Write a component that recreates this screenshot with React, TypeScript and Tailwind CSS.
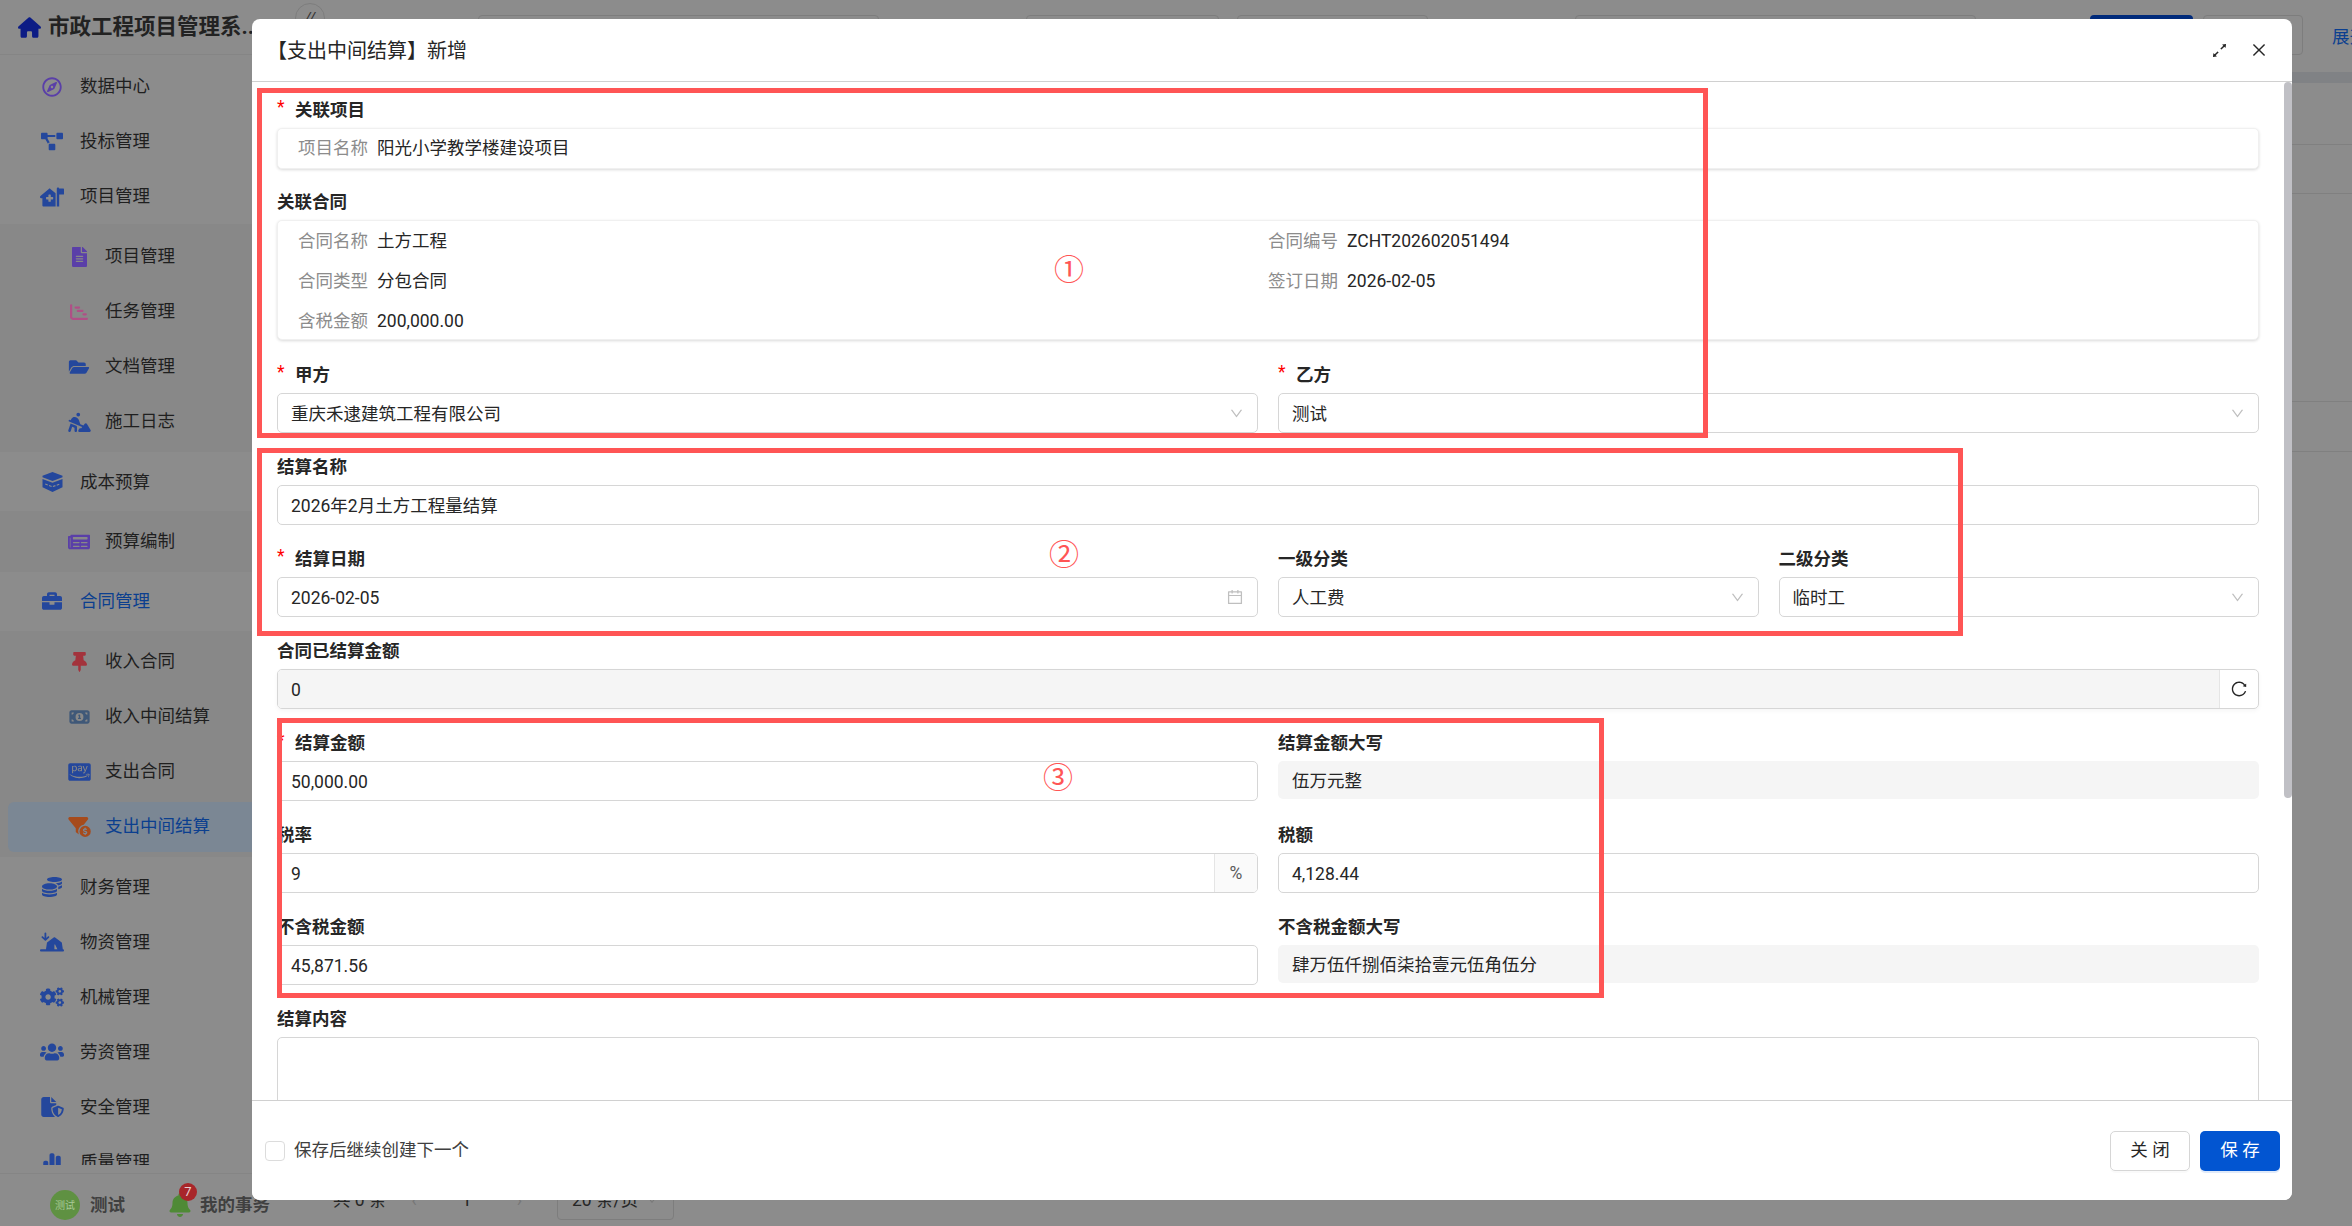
import React from 'react';
import { AiOutlineArrowsAlt, AiOutlineCalendar, AiOutlineClose, AiOutlineDown, AiOutlineReload } from 'react-icons/ai';
import {
  FaBell, FaBriefcase, FaCcAmazonPay, FaCoins, FaFileAlt, FaFolderOpen, FaNewspaper, FaProjectDiagram,
  FaRegCompass, FaThumbtack, FaUsers, FaCogs,
} from 'react-icons/fa';
import {
  FaChartGantt, FaChartSimple, FaFileShield, FaFilterCircleDollar, FaHouse, FaHouseMedicalFlag, FaMoneyBill1,
  FaPersonDigging, FaTentArrowDownToLine,
} from 'react-icons/fa6';

const font = 'font-["Roboto","Noto_Sans_CJK_SC",sans-serif]';

// ─── Sidebar ─────────────────────────────────────────────────────────────────
function BudgetIcon({ className }: { className?: string }) {
  return (
    <svg viewBox="0 0 24 22" className={className} fill="currentColor">
      <path d="M12 0 23 4.2v1.6L12 10 1 5.8V4.2z" />
      <path d="M1 7.6l11 4.2 11-4.2v9.2L12 22 1 16.800z" />
      <path d="M4 13.200l8 3 8-3" fill="none" stroke="#8c8c8c" strokeWidth="1.2" strokeDasharray="3 1.500" />
    </svg>
  );
}

type IconType = React.ComponentType<{ className?: string }>;

function TopItem({ icon: Icon, label, iconClass, active }: { icon: IconType; label: string; iconClass: string; active?: boolean }) {
  return (
    <div className="h-[55px] flex items-center pl-10">
      <div className="w-6 flex justify-center shrink-0">
        <Icon className={iconClass} />
      </div>
      <span className={`ml-4 text-[17.500px] ${active ? 'text-[#0b3f8f]' : 'text-[#1f1f1f]'}`}>{label}</span>
    </div>
  );
}

function SubItem({ icon: Icon, label, iconClass, active }: { icon: IconType; label: string; iconClass: string; active?: boolean }) {
  return (
    <div className="h-[55px] flex items-center pl-2">
      <div className={`flex-1 h-[50px] flex items-center pl-[59px] rounded-l-md ${active ? 'bg-[#7b8794]' : ''}`}>
        <div className="w-6 flex justify-center shrink-0">
          <Icon className={iconClass} />
        </div>
        <span className={`ml-[14px] text-[17.500px] ${active ? 'text-[#0b3f8f]' : 'text-[#1f1f1f]'}`}>{label}</span>
      </div>
    </div>
  );
}

function SubGroup({ children, className }: { children: React.ReactNode; className: string }) {
  return <div className={`py-[3px] bg-[#888888] ${className}`}>{children}</div>;
}

function Sidebar() {
  return (
    <aside className="w-[310px] h-full shrink-0 flex flex-col">
      <div className="h-[55px] shrink-0 flex items-center pl-[18px] border-b border-[#858585]">
        <FaHouse className="w-[23px] h-[21px] text-[#0c1c85]" />
        <span className="ml-[7px] text-[21.500px] font-bold text-[#222222] whitespace-nowrap">市政工程项目管理系..</span>
      </div>
      <div className="h-[1110px] shrink-0 overflow-hidden pt-1">
        <TopItem icon={FaRegCompass} label="数据中心" iconClass="w-5 h-5 text-[#5a3fa8]" />
        <TopItem icon={FaProjectDiagram} label="投标管理" iconClass="w-[22px] h-[19px] text-[#24479c]" />
        <TopItem icon={FaHouseMedicalFlag} label="项目管理" iconClass="w-6 h-5 text-[#24479c]" />
        <SubGroup className="pt-[5px] mb-[2.500px]">
          <SubItem icon={FaFileAlt} label="项目管理" iconClass="w-[15px] h-5 text-[#5a3fa8]" />
          <SubItem icon={FaChartGantt} label="任务管理" iconClass="w-5 h-[18px] text-[#b04f86]" />
          <SubItem icon={FaFolderOpen} label="文档管理" iconClass="w-[22px] h-[18px] text-[#24479c]" />
          <SubItem icon={FaPersonDigging} label="施工日志" iconClass="w-[23px] h-5 text-[#24479c]" />
        </SubGroup>
        <TopItem icon={BudgetIcon} label="成本预算" iconClass="w-[23px] h-5 text-[#24479c]" />
        <SubGroup className="mt-[1.500px] mb-[1.500px]">
          <SubItem icon={FaNewspaper} label="预算编制" iconClass="w-[22px] h-5 text-[#5a3fa8]" />
        </SubGroup>
        <TopItem icon={FaBriefcase} label="合同管理" iconClass="w-5 h-5 text-[#24479c]" active />
        <SubGroup className="my-[2.500px]">
          <SubItem icon={FaThumbtack} label="收入合同" iconClass="w-[15px] h-5 text-[#a3333c]" />
          <SubItem icon={FaMoneyBill1} label="收入中间结算" iconClass="w-[23px] h-[18px] text-[#3f5878]" />
          <SubItem icon={FaCcAmazonPay} label="支出合同" iconClass="w-[23px] h-[20px] text-[#24479c]" />
          <SubItem icon={FaFilterCircleDollar} label="支出中间结算" iconClass="w-[23px] h-5 text-[#a64b1c]" active />
        </SubGroup>
        <TopItem icon={FaCoins} label="财务管理" iconClass="w-5 h-5 text-[#24479c]" />
        <TopItem icon={FaTentArrowDownToLine} label="物资管理" iconClass="w-6 h-5 text-[#24479c]" />
        <TopItem icon={FaCogs} label="机械管理" iconClass="w-6 h-5 text-[#24479c]" />
        <TopItem icon={FaUsers} label="劳资管理" iconClass="w-6 h-5 text-[#24479c]" />
        <TopItem icon={FaFileShield} label="安全管理" iconClass="w-[23px] h-5 text-[#24479c]" />
        <TopItem icon={FaChartSimple} label="质量管理" iconClass="w-[18px] h-5 text-[#24479c]" />
      </div>
      <div className="mt-[8px] flex-1 border-t border-[#858585] flex items-center pl-[50px] pt-[10px]">
        <div className="w-[30px] h-[30px] rounded-full bg-[#5f9142] flex items-center justify-center text-[10px] text-[#a9c99a]">测试</div>
        <span className="ml-[10px] text-[17.500px] font-bold text-[#404040]">测试</span>
        <div className="relative ml-[44px]">
          <FaBell className="w-[22px] h-6 text-[#4f8a36]" />
          <span className="absolute -top-[10px] left-[10px] w-[18px] h-[18px] rounded-full bg-[#a8262a] text-[13px] leading-[18px] text-center text-[#e8d0d0]">7</span>
        </div>
        <span className="ml-[9px] text-[17.500px] font-bold text-[#404040]">我的事务</span>
      </div>
    </aside>
  );
}

// ─── Page behind the dialog ──────────────────────────────────────────────────
function MainBehind() {
  return (
    <main className="flex-1 min-w-0 h-full ml-[10px] flex flex-col relative overflow-hidden">
      <div className="h-[72px] shrink-0 flex items-start pt-[15px] pl-[158px]">
        <div className="shrink-0 w-[401px] h-10 rounded border border-[#7d7d7d]" />
        <div className="shrink-0 ml-[147px] w-[193px] h-10 rounded border border-[#7d7d7d]" />
        <div className="shrink-0 ml-[18px] w-[191px] h-10 rounded border border-[#7d7d7d]" />
        <div className="shrink-0 ml-[147px] w-[401px] h-10 rounded border border-[#7d7d7d]" />
        <div className="shrink-0 ml-[114px] w-[103px] h-10 rounded bg-[#002a7a]" />
        <div className="shrink-0 ml-[10px] w-[100px] h-10 rounded border border-[#7d7d7d]" />
        <span className="shrink-0 ml-[29px] mt-[9px] text-[17.500px] text-[#0b3f8f] whitespace-nowrap">展开</span>
      </div>
      <div className="h-[11px] shrink-0 bg-[#808285]" />
      <div className="h-[62px] shrink-0 border-b border-[#808080]" />
      <div className="h-[49px] shrink-0 border-b border-[#808080]" />
      <div className="h-[208px] shrink-0 border-b border-[#808080]" />
      <div className="h-[50px] shrink-0 border-b border-[#808080]" />
      <div className="mt-auto h-[46px] pb-[6px] flex items-center pl-[13px] text-[17.500px] text-[#262626]">
        <span>共 0 条</span>
        <span className="ml-[25px] text-[#777777]">‹</span>
        <span className="ml-[45px]">1</span>
        <span className="ml-[45px] text-[#777777]">›</span>
        <div className="ml-[35px] w-[117px] h-10 rounded border border-[#7d7d7d] flex items-center px-[14px]">
          <span>20 条/页</span>
          <AiOutlineDown className="ml-2 w-3 h-3 text-[#777777]" />
        </div>
      </div>
    </main>
  );
}

// ─── Form pieces ─────────────────────────────────────────────────────────────
function Label({ text, required }: { text: string; required?: boolean }) {
  return (
    <div className="h-9 flex items-center text-[17.500px] font-bold text-[#262626]">
      {required && <span className="w-[18px] text-[#ff0000] font-normal leading-none -mt-[4px]">*</span>}
      {text}
    </div>
  );
}

function Input({ value, icon, disabled }: { value: string; icon?: React.ReactNode; disabled?: boolean }) {
  return (
    <div className={`h-10 rounded-[5px] border border-[#d6d6d6] flex items-center justify-between px-[13px] text-[17.500px] text-[#262626] ${disabled ? 'bg-[#f5f5f5]' : 'bg-white'}`}>
      <span className="pt-[1.500px]">{value}</span>
      {icon}
    </div>
  );
}

const chevron = <AiOutlineDown className="w-[15px] h-[15px] text-[#bfbfbf]" />;

function ReadOnly({ value }: { value: string }) {
  return <div className="h-[38px] rounded-[5px] bg-[#f5f5f5] flex items-center pl-[14px] pt-[1.500px] text-[17.500px] text-[#262626]">{value}</div>;
}

function Info({ label, value }: { label: string; value: string }) {
  return (
    <div className="h-10 flex items-center text-[17.500px]">
      <span className="text-[#8c8c8c] w-[70px] shrink-0 whitespace-nowrap">{label}</span>
      <span className="ml-[9px] text-[#262626]">{value}</span>
    </div>
  );
}

const card = 'rounded-[5px] border border-[#f0f0f0] shadow-[0_1px_3px_rgba(0,0,0,0.15)] bg-white';

function Form() {
  return (
    <div className={`flex-1 overflow-hidden pt-[10px] pl-[25px] pr-[33px] ${font}`}>
      <Label text="关联项目" required />
      <div className={`h-[41px] flex items-center px-5 ${card}`}>
        <Info label="项目名称" value="阳光小学教学楼建设项目" />
      </div>
      <div className="mt-[15px]">
        <Label text="关联合同" />
        <div className={`h-[120px] grid grid-cols-2 content-start px-5 ${card}`}>
          <Info label="合同名称" value="土方工程" />
          <Info label="合同编号" value="ZCHT202602051494" />
          <Info label="合同类型" value="分包合同" />
          <Info label="签订日期" value="2026-02-05" />
          <Info label="含税金额" value="200,000.00" />
        </div>
      </div>
      <div className="mt-[17px] grid grid-cols-4 gap-x-5 gap-y-4">
        <div className="col-span-2">
          <Label text="甲方" required />
          <Input value="重庆禾逮建筑工程有限公司" icon={chevron} />
        </div>
        <div className="col-span-2">
          <Label text="乙方" required />
          <Input value="测试" icon={chevron} />
        </div>
        <div className="col-span-4">
          <Label text="结算名称" />
          <Input value="2026年2月土方工程量结算" />
        </div>
        <div className="col-span-2">
          <Label text="结算日期" required />
          <Input value="2026-02-05" icon={<AiOutlineCalendar className="w-[18px] h-[18px] text-[#bfbfbf]" />} />
        </div>
        <div>
          <Label text="一级分类" />
          <Input value="人工费" icon={chevron} />
        </div>
        <div>
          <Label text="二级分类" />
          <Input value="临时工" icon={chevron} />
        </div>
        <div className="col-span-4">
          <Label text="合同已结算金额" />
          <div className="h-10 rounded-[5px] border border-[#d6d6d6] overflow-hidden flex text-[17.500px] text-[#262626] shadow-[0_2px_4px_rgba(0,0,0,0.04)]">
            <div className="flex-1 bg-[#f5f5f5] flex items-center pl-[13px] pt-[1.500px]">0</div>
            <div className="w-[39px] border-l border-[#e5e5e5] flex items-center justify-center">
              <AiOutlineReload className="w-[18px] h-[18px] text-[#262626]" />
            </div>
          </div>
        </div>
        <div className="col-span-2">
          <Label text="结算金额" required />
          <Input value="50,000.00" />
        </div>
        <div className="col-span-2">
          <Label text="结算金额大写" />
          <ReadOnly value="伍万元整" />
        </div>
        <div className="col-span-2">
          <Label text="税率" />
          <div className="h-10 rounded-[5px] border border-[#d6d6d6] overflow-hidden flex text-[17.500px] text-[#262626]">
            <div className="flex-1 flex items-center pl-[13px] pt-[1.500px]">9</div>
            <div className="w-[43px] bg-[#fafafa] border-l border-[#e5e5e5] flex items-center justify-center text-[#595959]">%</div>
          </div>
        </div>
        <div className="col-span-2">
          <Label text="税额" />
          <Input value="4,128.44" />
        </div>
        <div className="col-span-2">
          <Label text="不含税金额" />
          <Input value="45,871.56" />
        </div>
        <div className="col-span-2">
          <Label text="不含税金额大写" />
          <ReadOnly value="肆万伍仟捌佰柒拾壹元伍角伍分" />
        </div>
        <div className="col-span-4">
          <Label text="结算内容" />
          <div className="h-[120px] rounded-[5px] border border-[#d6d6d6]" />
        </div>
      </div>
    </div>
  );
}

// ─── Dialog ──────────────────────────────────────────────────────────────────
function Dialog() {
  return (
    <div className={`absolute left-[252px] top-[19px] w-[2040px] h-[1181px] rounded-lg bg-white overflow-hidden flex flex-col ${font}`}>
      <div className="h-[63px] shrink-0 flex items-center pl-[15px] pr-[24px] border-b border-[#d0d0d0]">
        <span className="text-[20px] text-[#262626] flex-1 pt-[1.500px]">【支出中间结算】新增</span>
        <AiOutlineArrowsAlt className="w-[19px] h-[19px] text-[#262626]" />
        <AiOutlineClose className="ml-[21px] w-[18px] h-[18px] text-[#262626]" />
      </div>
      <Form />
      <div className="h-[100px] shrink-0 border-t border-[#d0d0d0] bg-white flex items-center pl-[13px] pr-[12px]">
        <div className="w-5 h-5 rounded border border-[#dcdcdc]" />
        <span className="ml-[9px] text-[17.500px] text-[#404040] flex-1">保存后继续创建下一个</span>
        <button className="w-20 h-10 rounded-[5px] border border-[#d6d6d6] text-[17.500px] text-[#262626] shadow-[0_2px_0_rgba(0,0,0,0.02)]">关 闭</button>
        <button className="ml-[10px] w-20 h-10 rounded-[5px] bg-[#0255d1] text-[17.500px] text-white shadow-[0_2px_0_rgba(2,85,209,0.12)]">保 存</button>
      </div>

      {/* scrollbar */}
      <div className="absolute right-0 top-[63px] w-2 h-[716px] rounded-t-md rounded-b-md bg-[#c0c0c5]" />

      {/* red annotations drawn on top of the form */}
      <div className="absolute left-[5px] top-[69px] w-[1451px] h-[350px] border-[5px] border-[#ff5555]" />
      <div className="absolute left-[5px] top-[429px] w-[1706px] h-[188px] border-[5px] border-[#ff5555]" />
      <div className="absolute left-[25px] top-[699px] w-[1327px] h-[280px] border-[5px] border-[#ff5555]" />
      <span className="absolute left-[802px] top-[231px] text-[30px] leading-10 text-[#ff5555]">①</span>
      <span className="absolute left-[797px] top-[516px] text-[30px] leading-10 text-[#ff5555]">②</span>
      <span className="absolute left-[791px] top-[739px] text-[30px] leading-10 text-[#ff5555]">③</span>
    </div>
  );
}

export default function App() {
  return (
    <div className={`relative w-full h-screen overflow-hidden flex bg-[#8c8c8c] ${font}`}>
      <Sidebar />
      <MainBehind />
      <div className="absolute left-[295px] top-[3px] w-[30px] h-[30px] rounded-full border border-[#7d7d7d] flex items-center justify-center text-[15px] italic text-[#333333]">//</div>
      <Dialog />
    </div>
  );
}
